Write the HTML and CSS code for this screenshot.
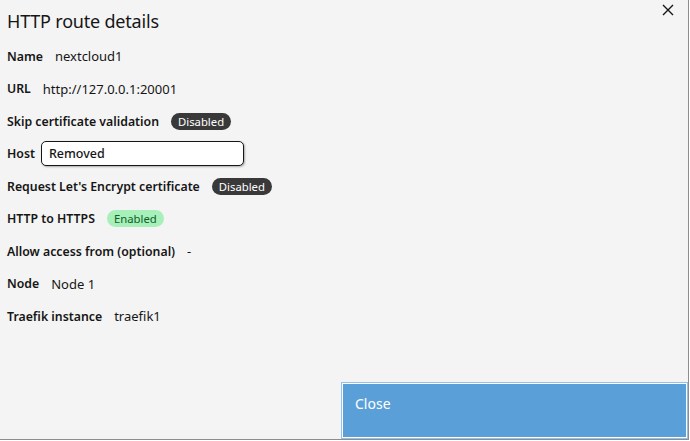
FILE: index.html
```html
<!DOCTYPE html>
<html lang="en">
<head>
  <meta charset="UTF-8">
  <title>HTTP route details</title>
  <link rel="stylesheet" href="styles.css">
</head>
<body>
  <div class="modal">
    <div class="modal-header">
      <h2>HTTP route details</h2>
      <button class="close-x" aria-label="Close">
        <svg width="12" height="12" viewBox="0 0 12 12"><path d="M1 1 L11 11 M11 1 L1 11" stroke="#161616" stroke-width="1.4" fill="none"/></svg>
      </button>
    </div>

    <!-- route fields -->
    <div class="details">
      <div class="row"><span class="label">Name</span><span class="value">nextcloud1</span></div>
      <div class="row"><span class="label">URL</span><span class="value">http://127.0.0.1:20001</span></div>
      <div class="row"><span class="label">Skip certificate validation</span><span class="tag tag-off">Disabled</span></div>
      <div class="row"><span class="label">Host</span><span class="host-box">Removed</span></div>
      <div class="row"><span class="label">Request Let's Encrypt certificate</span><span class="tag tag-off">Disabled</span></div>
      <div class="row"><span class="label">HTTP to HTTPS</span><span class="tag tag-on">Enabled</span></div>
      <div class="row"><span class="label">Allow access from (optional)</span><span class="value">-</span></div>
      <div class="row"><span class="label">Node</span><span class="value">Node 1</span></div>
      <div class="row"><span class="label">Traefik instance</span><span class="value">traefik1</span></div>
    </div>

    <div class="modal-footer">
      <button class="btn-close">Close</button>
    </div>
  </div>
</body>
</html>
```
FILE: styles.css
```css
body {
  margin: 0;
  background: #fff;
  font-family: "Noto Sans", Arial, sans-serif;
  color: #161616;
}
.modal {
  width: 688px;
  height: 439px;
  background: #f4f4f4;
  border-right: 1px solid #8d8d8d;
  border-bottom: 1px solid #8d8d8d;
  display: flex;
  flex-direction: column;
}
.modal-header {
  height: 40px;
  display: flex;
  align-items: center;
  justify-content: space-between;
  padding: 0 0 0 7px;
}
.modal-header h2 {
  margin: 0;
  font-size: 18px;
  font-weight: 400;
  letter-spacing: -0.2px;
  margin-top: 2px;
}
.close-x {
  border: none;
  background: none;
  padding: 0;
  margin: 0 14px 17px 0;
  cursor: pointer;
}
.details {
  flex: 1;
  padding-left: 7px;
}
.row {
  height: 32.5px;
  display: flex;
  align-items: center;
  gap: 12px;
  font-size: 13px;
}
.label {
  font-weight: 600;
  font-size: 12.3px;
}
.tag {
  font-size: 11.3px;
  padding: 0 7px;
  height: 17px;
  line-height: 17px;
  border-radius: 9px;
}
.tag-off {
  background: #393939;
  color: #fff;
}
.tag-on {
  background: #a7f0ba;
  color: #0e6027;
}
.host-box {
  width: 194px;
  height: 23px;
  line-height: 23px;
  padding-left: 7px;
  margin-left: -6px;
  background: #fff;
  border: 1px solid #161616;
  border-radius: 5px;
  box-shadow: 1px 1px 2px rgba(0, 0, 0, 0.3);
  font-weight: 500;
  font-size: 12.5px;
}
.modal-footer {
  display: flex;
  justify-content: flex-end;
}
.btn-close {
  width: 347px;
  height: 57px;
  background: #5a9fd8;
  border: 1px solid #93c1ea;
  box-shadow: inset 0 0 0 1px #fff;
  color: #fff;
  font-family: inherit;
  font-size: 14px;
  text-align: left;
  padding: 0 0 14px 13px;
  cursor: pointer;
}
```
